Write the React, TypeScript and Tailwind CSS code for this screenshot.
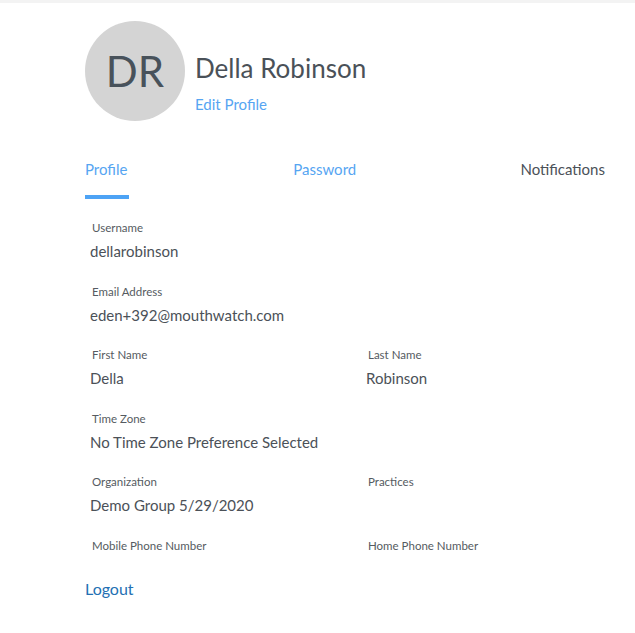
import React from "react";

const font = { fontFamily: "Lato, 'Open Sans', sans-serif" };

function Field({ label, value }: { label: string; value?: string }) {
  return (
    <div className="h-[63.6px]">
      <div className="pl-[2px] text-[11.5px] leading-[16px] text-[#555b61]">{label}</div>
      <div className="mt-[4px] text-[15px] leading-[22px] text-[#4b5158]">{value}</div>
    </div>
  );
}

export default function App() {
  return (
    <div className="min-h-[633px] w-[635px] bg-white" style={font}>
      <div className="h-[3px] bg-[#f3f3f3]" />
      <div className="pl-[85px] pr-[30px]">
        {/* header */}
        <div className="flex items-start pt-[18px]">
          <div className="flex h-[100px] w-[100px] items-center justify-center rounded-full bg-[#d4d4d4]">
            <span className="text-[42px] text-[#48525b]">DR</span>
          </div>
          <div className="ml-[10px] pt-[30px]">
            <div className="text-[26px] leading-[34px] text-[#4a5158]">Della Robinson</div>
            <div className="mt-[9px] text-[15px] leading-[20px] text-[#56a5f2]">Edit Profile</div>
          </div>
        </div>

        {/* tabs */}
        <div className="mt-[37px] flex items-start justify-between">
          <div className="flex flex-col">
            <span className="text-[15px] leading-[22px] text-[#56a5f2]">Profile</span>
            <span className="mt-[15px] h-[4px] w-[44px] bg-[#4da3f5]" />
          </div>
          <span className="text-[15px] leading-[22px] text-[#56a5f2]">Password</span>
          <span className="text-[15px] leading-[22px] text-[#4b5158]">Notifications</span>
        </div>

        {/* fields */}
        <div className="mt-[21px] pl-[5px]">
          <Field label="Username" value="dellarobinson" />
          <Field label="Email Address" value="eden+392@mouthwatch.com" />
          <div className="grid grid-cols-[276px_1fr]">
            <Field label="First Name" value="Della" />
            <Field label="Last Name" value="Robinson" />
          </div>
          <Field label="Time Zone" value="No Time Zone Preference Selected" />
          <div className="grid grid-cols-[276px_1fr]">
            <Field label="Organization" value="Demo Group 5/29/2020" />
            <Field label="Practices" />
          </div>
          <div className="grid grid-cols-[276px_1fr]">
            <div className="pl-[2px] text-[11.5px] leading-[16px] text-[#555b61]">Mobile Phone Number</div>
            <div className="pl-[2px] text-[11.5px] leading-[16px] text-[#555b61]">Home Phone Number</div>
          </div>
        </div>

        <div className="mt-[24px] text-[16px] leading-[22px] text-[#2470b3]">Logout</div>
      </div>
    </div>
  );
}
